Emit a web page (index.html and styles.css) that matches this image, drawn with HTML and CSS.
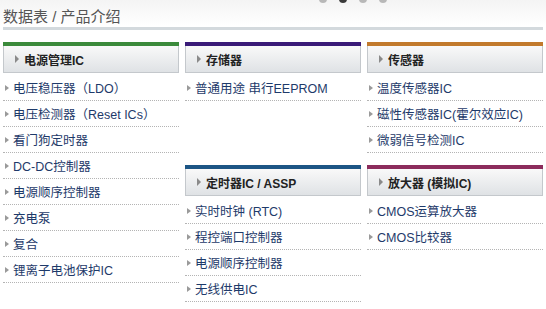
FILE: index.html
```html
<!DOCTYPE html>
<html lang="zh-CN">
<head>
    <meta charset="UTF-8">
    <title>数据表 / 产品介绍</title>
    <link rel="stylesheet" href="styles.css">
</head>
<body>
    <div class="pager">
        <span class="dot"></span>
        <span class="dot active"></span>
        <span class="dot"></span>
        <span class="dot"></span>
    </div>

    <h1 class="page-title">数据表 / 产品介绍</h1>

    <div class="grid">
        <div class="section green tall">
            <div class="head"><span class="arrow"></span>电源管理IC</div>
            <ul class="list">
                <li>电压稳压器（LDO）</li>
                <li>电压检测器（Reset ICs）</li>
                <li>看门狗定时器</li>
                <li>DC-DC控制器</li>
                <li>电源顺序控制器</li>
                <li>充电泵</li>
                <li>复合</li>
                <li>锂离子电池保护IC</li>
            </ul>
        </div>

        <div class="section purple">
            <div class="head"><span class="arrow"></span>存储器</div>
            <ul class="list">
                <li>普通用途 串行EEPROM</li>
            </ul>
        </div>

        <div class="section orange">
            <div class="head"><span class="arrow"></span>传感器</div>
            <ul class="list">
                <li>温度传感器IC</li>
                <li>磁性传感器IC(霍尔效应IC)</li>
                <li>微弱信号检测IC</li>
            </ul>
        </div>

        <div class="section blue">
            <div class="head"><span class="arrow"></span>定时器IC / ASSP</div>
            <ul class="list">
                <li>实时时钟 (RTC)</li>
                <li>程控端口控制器</li>
                <li>电源顺序控制器</li>
                <li>无线供电IC</li>
            </ul>
        </div>

        <div class="section maroon">
            <div class="head"><span class="arrow"></span>放大器 (模拟IC)</div>
            <ul class="list">
                <li>CMOS运算放大器</li>
                <li>CMOS比较器</li>
            </ul>
        </div>
    </div>
</body>
</html>
```

FILE: styles.css
```css
html {
    background: #fff linear-gradient(#f4f4f4, #ffffff 26px) no-repeat;
}

body {
    margin: 0;
    padding: 0 3px;
    font-family: "Liberation Sans", "Noto Sans CJK SC", sans-serif;
}

.pager {
    display: flex;
    justify-content: center;
    gap: 12px;
    height: 8px;
    margin-top: -5px;
    padding-left: 160px;
}

.dot {
    width: 8px;
    height: 8px;
    border-radius: 50%;
    background-color: #b8b8b8;
}

.dot.active {
    background-color: #3a3a3a;
}

.page-title {
    margin: 0;
    padding-top: 4px;
    font-size: 15px;
    font-weight: normal;
    line-height: 20px;
    color: #555;
    border-bottom: 3px solid #d3d9dd;
}

.grid {
    display: grid;
    grid-template-columns: repeat(3, 176px);
    column-gap: 6px;
    row-gap: 12px;
    margin-top: 12px;
}

.tall {
    grid-row: span 2;
}

.section {
    border-top: 4px solid #3b8a3b;
}

.purple { border-top-color: #3a1b78; }
.orange { border-top-color: #c27a2c; }
.blue { border-top-color: #1c5585; }
.maroon { border-top-color: #8c2c5c; }

.head {
    display: flex;
    align-items: center;
    height: 26px;
    padding-left: 11px;
    border: 1px solid #c4c8cc;
    border-top: none;
    background: linear-gradient(#f9f9f9, #dfe2e5);
    font-size: 12px;
    font-weight: bold;
    color: #222;
    margin-bottom: 2px;
}

.head .arrow {
    width: 0;
    height: 0;
    border-left: 4px solid #8a8a8a;
    border-top: 4px solid transparent;
    border-bottom: 4px solid transparent;
    margin-right: 5px;
}

.list {
    list-style: none;
    margin: 0;
    padding: 0;
}

.list li {
    display: flex;
    align-items: center;
    height: 25px;
    padding-left: 2px;
    border-bottom: 1px dotted #b4b4b4;
    font-size: 12.5px;
    color: #1e3a6a;
}

.list li::before {
    content: "";
    width: 0;
    height: 0;
    border-left: 4px solid #9a9a9a;
    border-top: 3px solid transparent;
    border-bottom: 3px solid transparent;
    margin-right: 4px;
}
```
